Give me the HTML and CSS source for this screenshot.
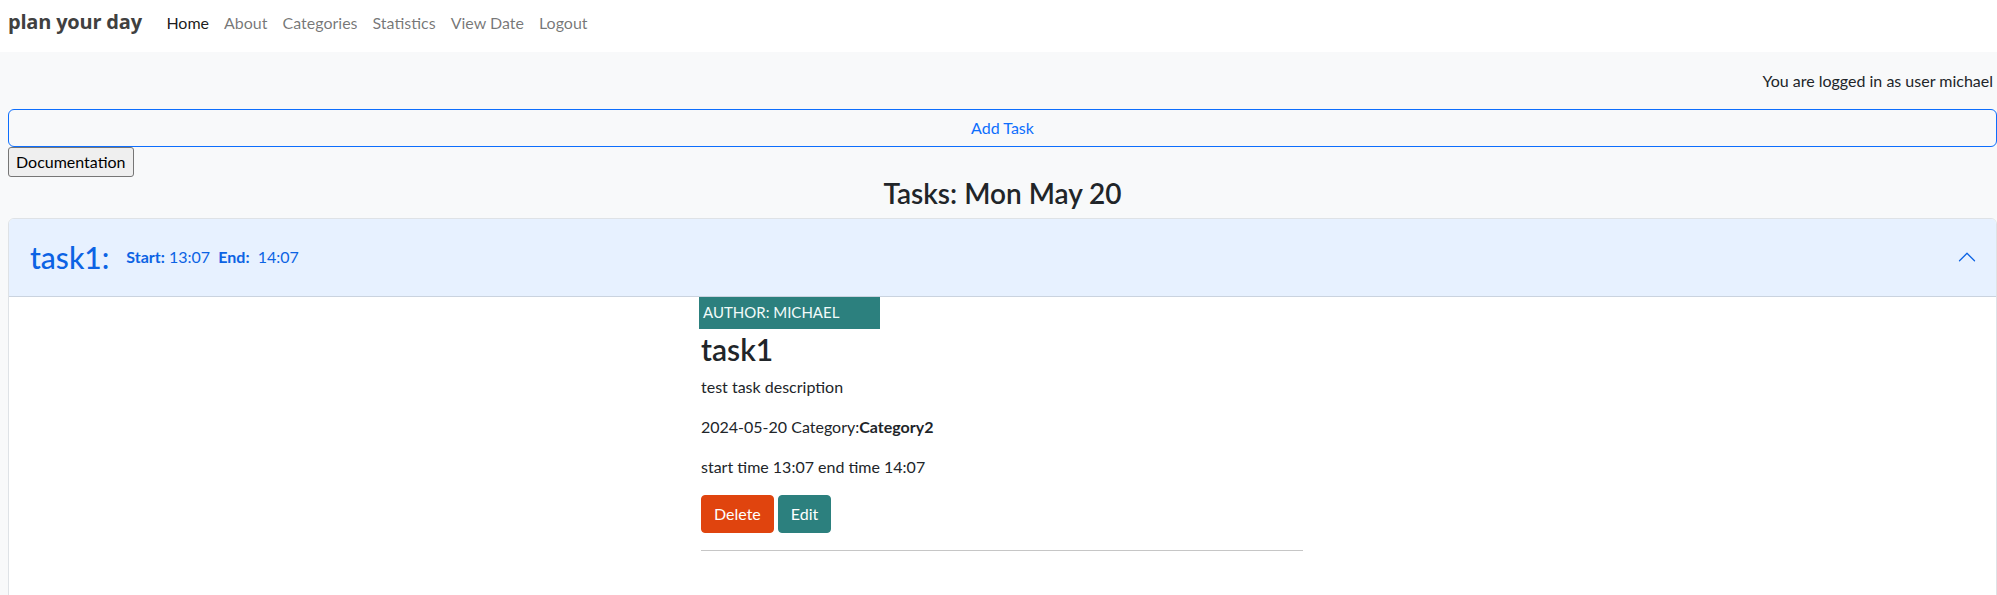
FILE: index.html
```html
<!DOCTYPE html>
<html lang="en">
<head>
<meta charset="utf-8">
<title>plan your day</title>
<link rel="stylesheet" href="styles.css">
</head>
<body>
<nav class="navbar">
  <a class="brand" href="#">plan your day</a>
  <ul class="nav-links">
    <li><a class="nav-link active" href="#">Home</a></li>
    <li><a class="nav-link" href="#">About</a></li>
    <li><a class="nav-link" href="#">Categories</a></li>
    <li><a class="nav-link" href="#">Statistics</a></li>
    <li><a class="nav-link" href="#">View Date</a></li>
    <li><a class="nav-link" href="#">Logout</a></li>
  </ul>
</nav>
<main class="page">
  <div class="login-info">You are logged in as user michael</div>
  <button class="btn-add" type="button">Add Task</button>
  <button class="btn-doc" type="button">Documentation</button>
  <h3 class="day-title">Tasks: Mon May 20</h3>
  <div class="accordion">
    <div class="acc-header">
      <span class="task-name">task1:</span>
      <span class="task-times"><b>Start:</b> 13:07&nbsp;&nbsp;<b>End:</b>&nbsp;&nbsp;14:07</span>
      <svg class="chevron" viewBox="0 0 16 16" width="20" height="20" aria-hidden="true"><path fill="#0c63e4" fill-rule="evenodd" d="M7.646 4.646a.5.5 0 0 1 .708 0l6 6a.5.5 0 0 1-.708.708L8 5.707l-5.646 5.647a.5.5 0 0 1-.708-.708l6-6z"/></svg>
    </div>
    <div class="acc-body">
      <div class="task-card">
        <div class="author">Author: michael</div>
        <h2 class="task-title">task1</h2>
        <p>test task description</p>
        <p>2024-05-20 Category:<b>Category2</b></p>
        <p>start time 13:07 end time 14:07</p>
        <div class="actions">
          <button class="btn btn-delete" type="button">Delete</button>
          <button class="btn btn-edit" type="button">Edit</button>
        </div>
        <hr class="divider">
      </div>
    </div>
  </div>
</main>
</body>
</html>
```
FILE: styles.css
```css
* { box-sizing: border-box; }

html, body {
  margin: 0;
  background: #f8f9fa;
  color: #212529;
  font-family: Lato, "Open Sans", sans-serif;
  font-size: 16px;
  line-height: 1.5;
  overflow: hidden;
}

/* Navbar */
.navbar {
  display: flex;
  align-items: baseline;
  height: 52px;
  padding: 7px 0 0 8px;
  background: #fff;
}
.brand {
  font-family: "Open Sans", Lato, sans-serif;
  font-size: 20px;
  font-weight: 700;
  letter-spacing: -0.2px;
  color: #404040;
  text-decoration: none;
  margin-right: 17px;
}
.nav-links {
  display: flex;
  list-style: none;
  margin: 0;
  padding: 0;
}
.nav-link {
  display: block;
  padding: 0 7.5px;
  color: rgba(0, 0, 0, 0.55);
  text-decoration: none;
}
.nav-link.active { color: rgba(0, 0, 0, 0.9); }

/* Page */
.page {
  padding: 17px 0 0 8px;
}
.login-info {
  text-align: right;
  padding-right: 4px;
  line-height: 24px;
  margin-bottom: 16px;
}
.btn-add {
  display: block;
  width: 100%;
  font: inherit;
  line-height: 24px;
  padding: 6px 12px;
  color: #0d6efd;
  background: transparent;
  border: 1px solid #0d6efd;
  border-radius: 6px;
}
.btn-doc {
  display: block;
  font: inherit;
  line-height: 24px;
  padding: 2px 7px;
  color: #000;
  background: #efefef;
  border: 1px solid #767676;
  border-radius: 3px;
}
.day-title {
  margin: 0 0 7px;
  text-align: center;
  font-size: 28px;
  font-weight: 600;
  line-height: 1.2;
}

/* Accordion */
.accordion {
  border: 1px solid #dee2e6;
  border-radius: 6px 6px 0 0;
  background: #fff;
}
.acc-header {
  display: flex;
  align-items: center;
  height: 78px;
  padding: 0 19px 0 21px;
  background: #e7f1ff;
  color: #0c63e4;
  border-bottom: 1px solid #cad3df;
  border-radius: 5px 5px 0 0;
}
.task-name {
  font-size: 30px;
  font-weight: 500;
  line-height: 1.2;
  margin-right: 17px;
}
.task-times {
  font-size: 16px;
  line-height: 24px;
}
.task-times b { font-weight: 700; }
.chevron {
  margin-left: auto;
  flex: none;
}
.acc-body {
  padding: 0 0 60px;
}
.task-card {
  margin-left: 690px;
  width: 604px;
}
.author {
  width: 181px;
  height: 32px;
  display: flex;
  align-items: center;
  padding-left: 4px;
  background: #2c807e;
  color: #f2fbfa;
  text-transform: uppercase;
  font-size: 15px;
}
.task-title {
  margin: 4px 0 9px;
  font-size: 30px;
  font-weight: 600;
  line-height: 33.6px;
  padding-left: 2px;
}
.task-card p {
  margin: 0 0 16px;
  padding-left: 2px;
  line-height: 24px;
  font-size: 16px;
}
.task-card p b { font-weight: 700; }
.actions {
  display: flex;
  gap: 4px;
  padding-left: 2px;
}
.btn {
  font: inherit;
  line-height: 24px;
  padding: 6px 12px;
  color: #fff;
  border: 1px solid transparent;
  border-radius: 4px;
}
.btn-delete { background: #e0440e; border-color: #e0440e; }
.btn-edit { background: #2c807e; border-color: #2c807e; }
.divider {
  margin: 17px 0 0 2px;
  border: 0;
  border-top: 1px solid #c6c6c6;
}
```
